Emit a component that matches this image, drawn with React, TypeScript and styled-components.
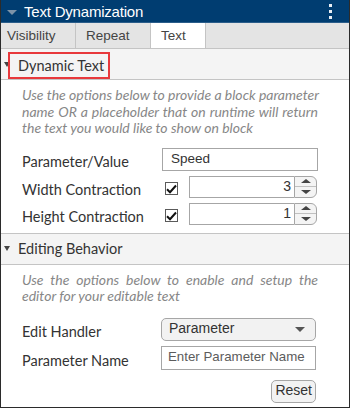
import React from 'react';
import styled, { createGlobalStyle } from 'styled-components';

const GlobalStyle = createGlobalStyle`
  html, body {
    margin: 0;
    padding: 0;
    background: #ffffff;
  }
  * {
    box-sizing: border-box;
  }
`;

const UI_FONT = `Lato, 'Open Sans', sans-serif`;
const ARIAL = `'Liberation Sans', Arial, sans-serif`;

const Frame = styled.div`
  width: 350px;
  height: 408px;
  border-left: 1px solid #2b2b2b;
  border-right: 1px solid #2b2b2b;
  border-bottom: 1px solid #2b2b2b;
  display: flex;
  flex-direction: column;
  overflow: hidden;
  background: #ffffff;
`;

const TitleBar = styled.div`
  height: 23px;
  background: #003d71;
  border-bottom: 1px solid #2a5d8a;
  display: flex;
  align-items: center;
  padding: 0 8px 0 6px;
  color: #ffffff;
  font-family: ${ARIAL};
  font-size: 15px;
  letter-spacing: -0.2px;
`;

const TitleCaret = styled.span`
  width: 0;
  height: 0;
  border-left: 5px solid transparent;
  border-right: 5px solid transparent;
  border-top: 5px solid #7d93a8;
  margin-right: 7px;
  margin-top: 2px;
`;

const TitleText = styled.span`
  flex: 1;
`;

const Kebab = styled.span`
  display: flex;
  flex-direction: column;
  gap: 3px;
  margin-right: 9px;
  & > i {
    width: 3px;
    height: 3px;
    background: #e8eef4;
  }
`;

const TabBar = styled.div`
  height: 26px;
  background: #e4e4e4;
  border-bottom: 1px solid #c4c4c4;
  display: flex;
`;

const Tab = styled.div<{ active?: boolean; w: number; shift?: number }>`
  width: ${({ w }) => w}px;
  margin-left: ${({ shift }) => shift || 0}px;
  height: 25px;
  background: ${({ active }) => (active ? '#ffffff' : '#e4e4e4')};
  border-right: 1px solid #c4c4c4;
  display: flex;
  align-items: center;
  padding-left: 10px;
  font-family: ${ARIAL};
  font-size: 13.5px;
  color: #444444;
`;

const SectionHeader = styled.div<{ topBorder?: boolean }>`
  height: ${({ topBorder }) => (topBorder ? 32 : 31)}px;
  background: #f4f4f4;
  border-top: ${({ topBorder }) => (topBorder ? '1px solid #c4c4c4' : 'none')};
  border-bottom: 1px solid #c4c4c4;
  display: flex;
  align-items: center;
  padding-left: 3px;
  font-family: ${UI_FONT};
  font-size: 14.5px;
  color: #333333;
`;

const Caret = styled.span<{ gap: number }>`
  width: 0;
  height: 0;
  border-left: 3px solid transparent;
  border-right: 3px solid transparent;
  border-top: 5px solid #444444;
  margin-right: ${({ gap }) => gap}px;
`;

const Highlight = styled.span`
  border: 2px solid #e8393c;
  width: 102px;
  height: 27px;
  display: flex;
  align-items: center;
  padding: 0 0 1px 8px;
  margin-top: 3px;
`;

const SectionBody = styled.div<{ bottom?: number }>`
  padding: 7px 31px ${({ bottom }) => bottom || 0}px 21px;
`;

const Description = styled.div`
  font-family: ${UI_FONT};
  font-style: italic;
  font-size: 14px;
  line-height: 16.5px;
  color: #878787;
`;

const DescLine = styled.div<{ last?: boolean }>`
  text-align: justify;
  text-align-last: ${({ last }) => (last ? 'left' : 'justify')};
  white-space: nowrap;
`;

const Form = styled.div<{ top: number }>`
  display: grid;
  grid-template-columns: 140px 1fr;
  row-gap: 5px;
  margin-top: ${({ top }) => top}px;
`;

const Label = styled.div`
  font-family: ${UI_FONT};
  font-size: 14.5px;
  color: #333333;
  display: flex;
  align-items: center;
  padding-top: 5px;
`;

const TextField = styled.div<{ placeholder?: boolean }>`
  height: ${({ placeholder }) => (placeholder ? 24 : 23)}px;
  border: 1px solid #a6a6a6;
  display: flex;
  align-items: center;
  padding: 0 0 2px ${({ placeholder }) => (placeholder ? 6 : 8)}px;
  font-family: ${ARIAL};
  font-size: ${({ placeholder }) => (placeholder ? 13.3 : 13.5)}px;
  color: ${({ placeholder }) => (placeholder ? '#5c5c5c' : '#333333')};
  background: #ffffff;
  margin-left: ${({ placeholder }) => (placeholder ? -1 : 0)}px;
  margin-right: ${({ placeholder }) => (placeholder ? 2 : 0)}px;
  white-space: nowrap;
  overflow: hidden;
`;

const CheckRow = styled.div`
  display: flex;
  align-items: center;
  height: 22px;
`;

const CheckBox = styled.span`
  width: 13px;
  height: 13px;
  border: 1px solid #5a5a5a;
  display: flex;
  align-items: center;
  justify-content: center;
  margin: 4px 11px 0 3px;
  background: #ffffff;
`;

const Spinner = styled.div`
  display: flex;
  height: 22px;
  width: 128px;
`;

const SpinValue = styled.div`
  flex: 1;
  border: 1px solid #a6a6a6;
  border-right: none;
  display: flex;
  align-items: center;
  justify-content: flex-end;
  padding: 0 3px 1px 0;
  font-family: ${ARIAL};
  font-size: 14px;
  color: #333333;
`;

const SpinButtons = styled.div`
  width: 23px;
  border: 1px solid #a6a6a6;
  border-radius: 0 6px 6px 0;
  display: flex;
  flex-direction: column;
  background: #f4f4f4;
  overflow: hidden;
`;

const SpinHalf = styled.div<{ down?: boolean }>`
  flex: 1;
  display: flex;
  align-items: center;
  justify-content: center;
  border-top: ${({ down }) => (down ? '1px solid #c0c0c0' : 'none')};
  & > span {
    width: 0;
    height: 0;
    border-left: 5px solid transparent;
    border-right: 5px solid transparent;
    ${({ down }) => (down ? 'border-top: 4px solid #444;' : 'border-bottom: 4px solid #444;')}
  }
`;

const Select = styled.div`
  height: 23px;
  border: 1px solid #a6a6a6;
  border-radius: 5px;
  background: #f2f2f2;
  display: flex;
  align-items: center;
  justify-content: space-between;
  padding: 0 10px 2px 7px;
  font-family: ${ARIAL};
  font-size: 14px;
  color: #333333;
  margin: 0 2px 0 -1px;
  & > span {
    width: 0;
    height: 0;
    border-left: 5px solid transparent;
    border-right: 5px solid transparent;
    border-top: 5px solid #555;
    margin-top: 3px;
  }
`;

const Footer = styled.div`
  display: flex;
  justify-content: flex-end;
  margin-top: 10px;
  padding-right: 2px;
`;

const ResetButton = styled.button`
  height: 23px;
  padding: 0 3px 2px;
  border: 1px solid #a6a6a6;
  border-radius: 5px;
  background: #f2f2f2;
  font-family: ${ARIAL};
  font-size: 14px;
  color: #333333;
`;

const Check = () => (
  <CheckBox>
    <svg width="11" height="10" viewBox="0 0 11 10">
      <path d="M1 5.2 L4 8.2 L10 1.5" fill="none" stroke="#111" strokeWidth="2" />
    </svg>
  </CheckBox>
);

const NumberSpinner = ({ value }: { value: number }) => (
  <Spinner>
    <SpinValue>{value}</SpinValue>
    <SpinButtons>
      <SpinHalf>
        <span />
      </SpinHalf>
      <SpinHalf down>
        <span />
      </SpinHalf>
    </SpinButtons>
  </Spinner>
);

const Paragraph = ({ lines }: { lines: string[] }) => (
  <Description>
    {lines.map((line, i) => (
      <DescLine key={line} last={i === lines.length - 1}>
        {line}
      </DescLine>
    ))}
  </Description>
);

const App = () => (
  <>
    <GlobalStyle />
    <Frame>
      <TitleBar>
        <TitleCaret />
        <TitleText>Text Dynamization</TitleText>
        <Kebab>
          <i />
          <i />
          <i />
        </Kebab>
      </TitleBar>
      <TabBar>
        <Tab w={79} shift={-4}>
          Visibility
        </Tab>
        <Tab w={75}>Repeat</Tab>
        <Tab w={55} active>
          Text
        </Tab>
      </TabBar>

      <SectionHeader>
        <Caret gap={-2} />
        <Highlight>Dynamic Text</Highlight>
      </SectionHeader>
      <SectionBody bottom={8}>
        <Paragraph
          lines={[
            'Use the options below to provide a block parameter',
            'name OR a placeholder that on runtime will return',
            'the text you would like to show on block',
          ]}
        />
        <Form top={11}>
          <Label>Parameter/Value</Label>
          <TextField>Speed</TextField>
          <Label>Width Contraction</Label>
          <CheckRow>
            <Check />
            <NumberSpinner value={3} />
          </CheckRow>
          <Label>Height Contraction</Label>
          <CheckRow>
            <Check />
            <NumberSpinner value={1} />
          </CheckRow>
        </Form>
      </SectionBody>

      <SectionHeader topBorder>
        <Caret gap={8} />
        Editing Behavior
      </SectionHeader>
      <SectionBody>
        <Paragraph lines={['Use the options below to enable and setup the', 'editor for your editable text']} />
        <Form top={13}>
          <Label>Edit Handler</Label>
          <Select>
            Parameter
            <span />
          </Select>
          <Label>Parameter Name</Label>
          <TextField placeholder>Enter Parameter Name</TextField>
        </Form>
        <Footer>
          <ResetButton>Reset</ResetButton>
        </Footer>
      </SectionBody>
    </Frame>
  </>
);

export default App;
